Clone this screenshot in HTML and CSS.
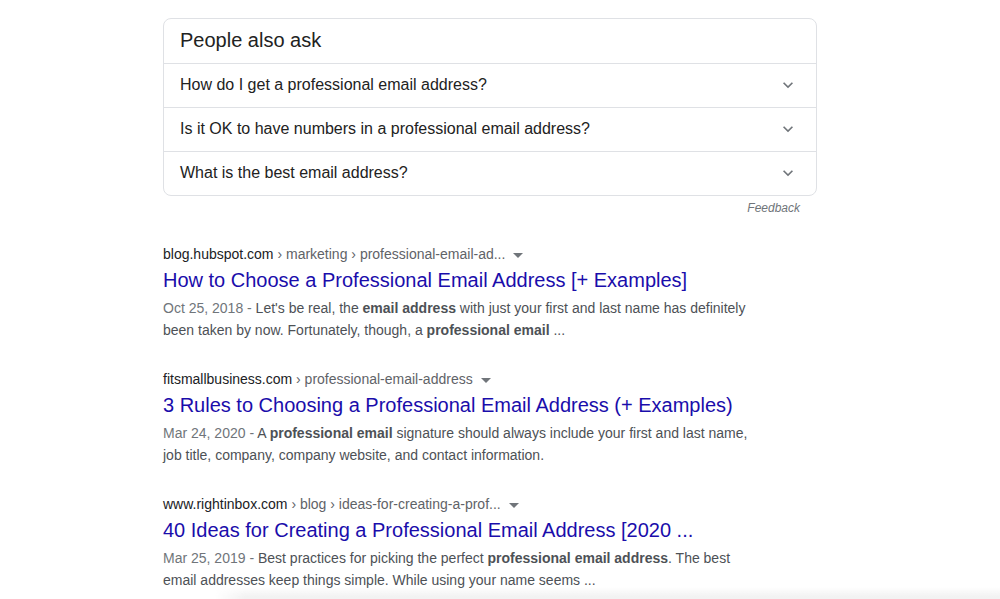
FILE: index.html
```html
<!DOCTYPE html>
<html>
<head>
<meta charset="utf-8">
<link rel="stylesheet" href="styles.css">
</head>
<body>
<div class="page">
  <div class="paa">
    <div class="paa-head">People also ask</div>
    <div class="paa-row"><span>How do I get a professional email address?</span>
      <svg class="chev" viewBox="0 0 24 24" width="20" height="20"><path d="M16.59 8.59L12 13.17 7.41 8.59 6 10l6 6 6-6z"/></svg></div>
    <div class="paa-row"><span>Is it OK to have numbers in a professional email address?</span>
      <svg class="chev" viewBox="0 0 24 24" width="20" height="20"><path d="M16.59 8.59L12 13.17 7.41 8.59 6 10l6 6 6-6z"/></svg></div>
    <div class="paa-row"><span>What is the best email address?</span>
      <svg class="chev" viewBox="0 0 24 24" width="20" height="20"><path d="M16.59 8.59L12 13.17 7.41 8.59 6 10l6 6 6-6z"/></svg></div>
  </div>
  <div class="feedback">Feedback</div>

  <div class="result">
    <div class="cite"><span class="host">blog.hubspot.com</span> › marketing › professional-email-ad... <span class="tri"></span></div>
    <a class="title">How to Choose a Professional Email Address [+ Examples]</a>
    <div class="snippet"><span class="date">Oct 25, 2018 -</span> Let's be real, the <b>email address</b> with just your first and last name has definitely been taken by now. Fortunately, though, a <b>professional email</b> ...</div>
  </div>

  <div class="result">
    <div class="cite"><span class="host">fitsmallbusiness.com</span> › professional-email-address <span class="tri"></span></div>
    <a class="title">3 Rules to Choosing a Professional Email Address (+ Examples)</a>
    <div class="snippet"><span class="date">Mar 24, 2020 -</span> A <b>professional email</b> signature should always include your first and last name, job title, company, company website, and contact information.</div>
  </div>

  <div class="result">
    <div class="cite"><span class="host">www.rightinbox.com</span> › blog › ideas-for-creating-a-prof... <span class="tri"></span></div>
    <a class="title">40 Ideas for Creating a Professional Email Address [2020 ...</a>
    <div class="snippet"><span class="date">Mar 25, 2019 -</span> Best practices for picking the perfect <b>professional email address</b>. The best email addresses keep things simple. While using your name seems ...</div>
  </div>
</div>
<div class="shade"></div>
</body>
</html>
```
FILE: styles.css
```css
html, body {
  margin: 0;
  padding: 0;
  background: #fff;
  font-family: "Liberation Sans", Arial, sans-serif;
  overflow: hidden;
}
.page {
  padding: 18px 0 0 163px;
  width: 654px;
}
.paa {
  border: 1px solid #dfe1e5;
  border-radius: 8px;
  width: 652px;
}
.paa-head {
  display: flex;
  align-items: center;
  padding: 0 0 1px 16px;
  font-size: 20px;
  color: #222;
  border-bottom: 1px solid #dfe1e5;
  box-sizing: border-box;
  height: 45px;
}
.paa-row {
  height: 44px;
  box-sizing: border-box;
  display: flex;
  align-items: center;
  justify-content: space-between;
  padding: 0 18px 2px 16px;
  font-size: 16px;
  color: #222;
  border-bottom: 1px solid #dfe1e5;
}
.paa-row:last-child { border-bottom: none; height: 43px; }
.chev { fill: #70757a; }
.feedback {
  text-align: right;
  padding-right: 17px;
  font-size: 12px;
  font-style: italic;
  color: #70757a;
  line-height: 16px;
  margin-top: 4px;
}
.result {
  margin-top: 28px;
  width: 600px;
}
.cite {
  font-size: 14px;
  line-height: 20px;
  color: #5f6368;
  white-space: nowrap;
}
.host { color: #202124; }
.tri {
  display: inline-block;
  width: 0;
  height: 0;
  border-left: 5px solid transparent;
  border-right: 5px solid transparent;
  border-top: 5px solid #70757a;
  margin-left: 4px;
  vertical-align: middle;
}
.title {
  display: block;
  margin-top: 3px;
  font-size: 20px;
  line-height: 26px;
  color: #1a0dab;
  white-space: nowrap;
}
.snippet {
  margin-top: 4px;
  font-size: 14px;
  line-height: 22px;
  color: #4d5156;
}
.snippet b { color: #4d5156; }
.date { color: #70757a; }
.shade {
  position: fixed;
  left: 215px;
  right: 0;
  bottom: 0;
  height: 12px;
  background: linear-gradient(to bottom, rgba(240,240,240,0) 0%, #f2f2f2 80%);
  -webkit-mask-image: linear-gradient(to right, transparent 0, #000 30px);
  mask-image: linear-gradient(to right, transparent 0, #000 30px);
}
```
